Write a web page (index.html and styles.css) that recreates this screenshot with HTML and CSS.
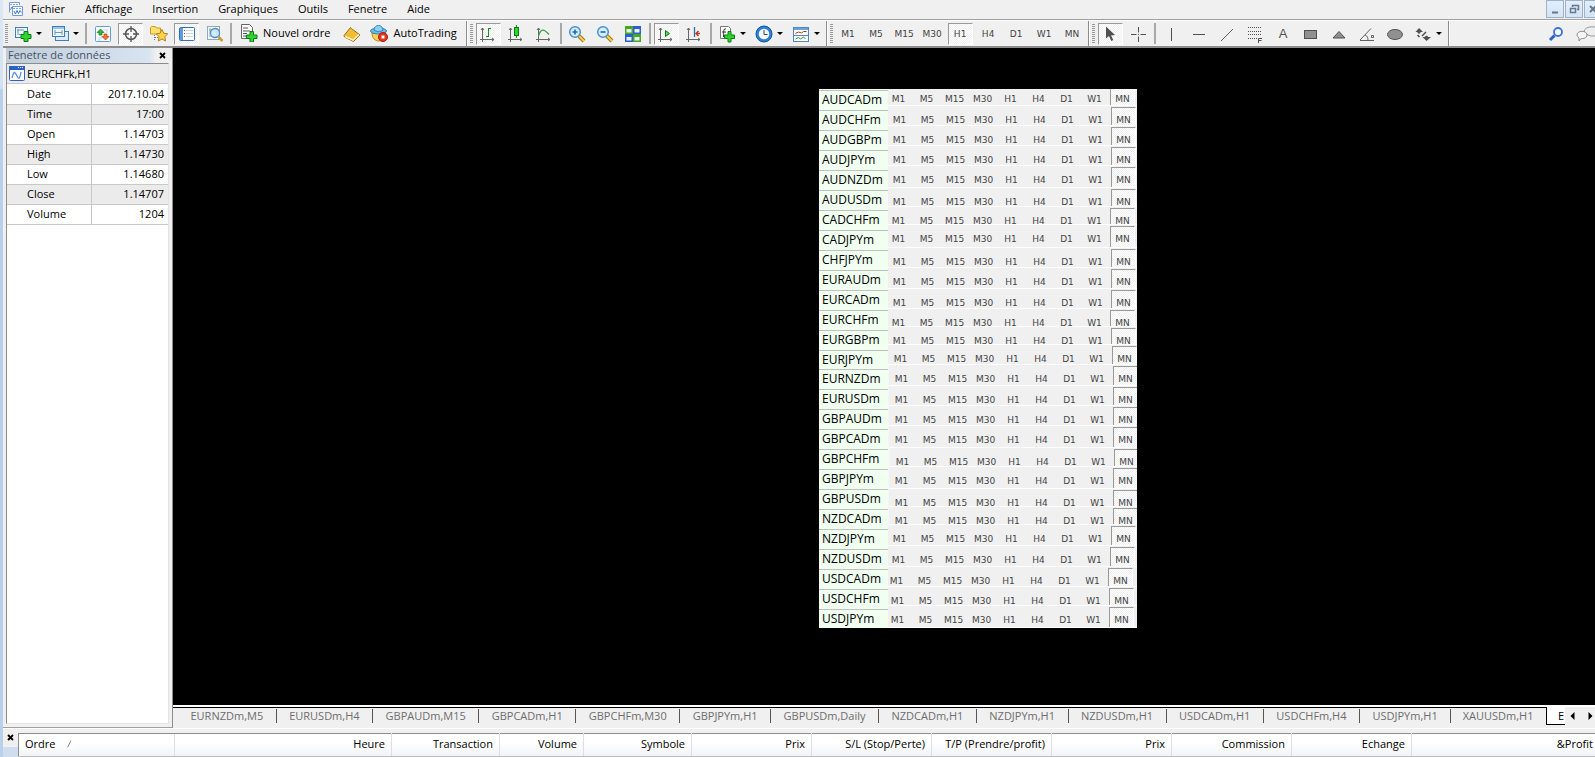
FILE: index.html
```html
<!DOCTYPE html>
<html lang="fr">
<head>
<meta charset="utf-8">
<title>Terminal</title>
<link rel="stylesheet" href="styles.css">
</head>
<body>
<div class="app">
  <header class="menubar">
    <svg class="app-icon" width="16" height="16" viewBox="0 0 16 16"><path d="M1.500 11.500V1.500h10V4M4.500 5.500h10v9h-10z" fill="#fff" stroke="#6f9be0"/><path d="M2 3.500h9M5 7.500h9" stroke="#7ba6ea" stroke-dasharray="2 1"/><path d="M2.500 9l1-3 1 2" fill="none" stroke="#5f90de"/><path d="M6 10l1.500 3L9 9.500l1.500 3 1.500-3 1.500 2" fill="none" stroke="#3d73d0"/></svg>
    <nav class="menus">
      <button>Fichier</button><button>Affichage</button><button>Insertion</button><button>Graphiques</button><button>Outils</button><button>Fenetre</button><button>Aide</button>
    </nav>
    <div class="window-buttons">
      <button aria-label="Réduire"><svg width="16" height="16" viewBox="0 0 16 16"><path d="M5 11.500h6" stroke="#66788c" stroke-width="2"/></svg></button>
      <button aria-label="Restaurer"><svg width="16" height="16" viewBox="0 0 16 16"><path d="M6.500 6V4.500h6v4H11M4.500 7.500h5v4h-5z" fill="none" stroke="#66788c" stroke-width="1.500"/></svg></button>
      <button aria-label="Fermer"><svg width="16" height="16" viewBox="0 0 16 16"><path d="M5 5l6 6M11 5l-6 6" stroke="#66788c" stroke-width="2"/></svg></button>
    </div>
  </header>

  <div class="toolbars">
    <div class="toolbar">
      <span class="grip"></span>
      <button class="tool drop" aria-label="Nouveau graphique"><svg width="18" height="18" viewBox="0 0 18 18"><rect x="1.500" y="2.500" width="12" height="10" fill="#eef6fd" stroke="#3f7fb5"/><path d="M4 4v6M3 5h7M5 9.500h4" stroke="#6b98bd" fill="none"/><path d="M10 6.500h4v3h3v4h-3v3h-4v-3H7v-4h3z" fill="#2fd52f" stroke="#0a7c12"/></svg></button>
      <button class="tool drop" aria-label="Profils"><svg width="18" height="18" viewBox="0 0 18 18"><rect x="4.500" y="6.500" width="13" height="9" fill="#dcebf7" stroke="#3f7fb5"/><rect x="1.500" y="1.500" width="12" height="10" fill="#eef6fd" stroke="#3f7fb5"/><path d="M2 3h11" stroke="#9cc3e3" stroke-width="2"/><path d="M4 5v5M11 5v5M4 7.500h7" stroke="#6b98bd"/></svg></button>
      <span class="sep"></span>
      <button class="tool" aria-label="Fenetre du marché"><svg width="18" height="18" viewBox="0 0 18 18"><rect x="1.500" y="1.500" width="15" height="15" rx="1" fill="#f7fbff" stroke="#5f9fd5"/><path d="M10 5h4M12 7h2M4 13h4M4 15h2" stroke="#b9d4ec"/><path d="M3 7.500L6.500 4 10 7.500H8v2.500H5V7.500z" fill="#35b435" stroke="#157c1b" stroke-width=".7"/><path d="M8 11.500L11.500 15 15 11.500h-2V9h-3v2.500z" fill="#f2753a" stroke="#b8400e" stroke-width=".7"/></svg></button>
      <button class="tool pressed" aria-label="Fenetre de données"><svg width="18" height="18" viewBox="0 0 18 18"><circle cx="9" cy="9" r="5.500" fill="none" stroke="#555" stroke-width="1.500"/><path d="M9 1v6M9 11v6M1 9h6M11 9h6" stroke="#555" stroke-width="1.300"/></svg></button>
      <button class="tool" aria-label="Navigateur"><svg width="18" height="18" viewBox="0 0 18 18"><path d="M.5 2.500l1-1h4l1 1.500h4v6H.5z" fill="#ffe071" stroke="#c79a2a"/><path d="M4.500 10v6M5 12.500h4" stroke="#777" stroke-dasharray="1 1"/><path d="M12 4.500l1.800 3.800 4 .5-3 2.900.8 4.300-3.600-2-3.700 2 .8-4.300-3-2.900 4-.5z" fill="#ffd34a" stroke="#b8831b"/></svg></button>
      <button class="tool pressed" aria-label="Terminal"><svg width="18" height="18" viewBox="0 0 18 18"><rect x="1.500" y="2.500" width="15" height="13" rx="1" fill="#fff" stroke="#2f6fb2"/><path d="M3.500 3v12" stroke="#5b9be0" stroke-width="3"/><path d="M6 5.500h1M6 8.500h1M6 11.500h1" stroke="#d33"/><path d="M8 5.500h7M8 8.500h7M8 11.500h7" stroke="#c6d6e6"/></svg></button>
      <button class="tool" aria-label="Testeur"><svg width="18" height="18" viewBox="0 0 18 18"><rect x="1.500" y="1.500" width="12" height="13" fill="#f4f8fc" stroke="#8fa9c0"/><path d="M4 3v9M11 3v9M3 5h8" stroke="#8aa" /><circle cx="9" cy="8" r="4.500" fill="#cfe6fa" fill-opacity=".85" stroke="#4f8fc8" stroke-width="1.300"/><path d="M12.500 12l4 4" stroke="#c9a02c" stroke-width="2.500"/></svg></button>
      <span class="sep"></span>
      <button class="tool wide"><svg width="20" height="18" viewBox="0 0 20 18"><path d="M3.500.5h8l3 3v11h-11z" fill="#fff" stroke="#666"/><path d="M5 4h5M5 7h7M5 9.500h4M5 12h3" stroke="#555"/><path d="M12 7.500h3.500V11H19v3.500h-3.500V18H12v-3.500H8.500V11H12z" fill="#2fd52f" stroke="#0a7c12"/></svg>Nouvel ordre</button>
      <button class="tool" aria-label="MetaEditor"><svg width="18" height="18" viewBox="0 0 18 18"><path d="M1 10.500L7.500 2.500c1 1.500 2 2 3 2.500L17 10l-6.500 6.500L1.500 12z" fill="#f0bd38" stroke="#9d6a12"/><path d="M2 11.500l8 3.500 6-5.500" fill="none" stroke="#fff0b0" stroke-width="1.500"/></svg></button>
      <button class="tool wide"><svg width="18" height="18" viewBox="0 0 18 18"><path d="M2 9c0 5 3 8 7 8s6-4 6-8z" fill="#ffd34a" stroke="#b8831b"/><ellipse cx="8.500" cy="7" rx="8" ry="3" fill="#6fb9e6" stroke="#3482b8"/><path d="M4 6c0-6 9-6 9 0-2 2-7 2-9 0z" fill="#8fd0f5" stroke="#3482b8"/><circle cx="13" cy="13" r="4.500" fill="#e2341d" stroke="#a81a0a"/><rect x="11.500" y="11.500" width="3" height="3" fill="#fff"/></svg>AutoTrading</button>
    </div>
    <div class="toolbar">
      <span class="grip"></span>
      <button class="tool pressed" aria-label="Barres"><svg width="18" height="18" viewBox="0 0 18 18"><path d="M3.500 3v14M1 14.500h14M2 5l1.500-2L5 5M13 13l2 1.500-2 1.500" fill="none" stroke="#666"/><path d="M9.500 3v9M7 11.500h2.500M9.500 3.500H12" stroke="#149414" fill="none"/></svg></button>
      <button class="tool" aria-label="Bougies"><svg width="18" height="18" viewBox="0 0 18 18"><path d="M3.500 3v14M1 14.500h14M2 5l1.500-2L5 5M13 13l2 1.500-2 1.500" fill="none" stroke="#666"/><path d="M9.500 0v13" stroke="#149414"/><rect x="7.500" y="2.500" width="4" height="8" fill="#2fd52f" stroke="#0a7c12"/></svg></button>
      <button class="tool" aria-label="Ligne"><svg width="18" height="18" viewBox="0 0 18 18"><path d="M3.500 3v14M1 14.500h14M2 5l1.500-2L5 5M13 13l2 1.500-2 1.500" fill="none" stroke="#666"/><path d="M3.500 11C6 3 9 4 14 9.500" fill="none" stroke="#38a048" stroke-width="1.300"/></svg></button>
      <span class="sep"></span>
      <button class="tool" aria-label="Zoom avant"><svg width="18" height="18" viewBox="0 0 18 18"><path d="M11 11l5 5" stroke="#a87c1a" stroke-width="4"/><path d="M11 11l5 5" stroke="#f5cf4a" stroke-width="2"/><circle cx="7" cy="7" r="5.300" fill="#d6ecfb" stroke="#4792cc" stroke-width="1.500"/><path d="M7 4.500v5M4.500 7h5" stroke="#1e6aa8" stroke-width="1.600"/></svg></button>
      <button class="tool" aria-label="Zoom arrière"><svg width="18" height="18" viewBox="0 0 18 18"><path d="M11 11l5 5" stroke="#a87c1a" stroke-width="4"/><path d="M11 11l5 5" stroke="#f5cf4a" stroke-width="2"/><circle cx="7" cy="7" r="5.300" fill="#d6ecfb" stroke="#4792cc" stroke-width="1.500"/><path d="M4.500 7h5" stroke="#1e6aa8" stroke-width="1.600"/></svg></button>
      <button class="tool" aria-label="Mosaïque"><svg width="18" height="18" viewBox="0 0 18 18"><path d="M1 1h8v8H1zM9 9h8v8H9z" fill="#45a81f"/><path d="M9 1h8v8H9zM1 9h8v8H1z" fill="#2a5fcf"/><path d="M2.500 4h5v3.500h-5zM10.500 4h5v3.500h-5zM2.500 12h5v3.500h-5zM10.500 12h5v3.500h-5z" fill="#e8f2ff"/></svg></button>
      <span class="sep"></span>
      <button class="tool pressed" aria-label="Défilement automatique"><svg width="18" height="18" viewBox="0 0 18 18"><path d="M3.500 3v14M1 14.500h14M2 5l1.500-2L5 5M13 13l2 1.500-2 1.500" fill="none" stroke="#666"/><path d="M8.500 5.500l4 3-4 3z" fill="#5fd55f" stroke="#0a7c12"/></svg></button>
      <button class="tool" aria-label="Décalage"><svg width="18" height="18" viewBox="0 0 18 18"><path d="M3.500 3v14M1 14.500h14M2 5l1.500-2L5 5M13 13l2 1.500-2 1.500" fill="none" stroke="#666"/><path d="M9.500 2v10" stroke="#2670b8" stroke-width="1.300"/><path d="M15 8.500h-4M13.500 6l-2.500 2.500 2.500 2.500" stroke="#c0391b" fill="none" stroke-width="1.500"/></svg></button>
      <span class="sep"></span>
      <button class="tool drop" aria-label="Indicateurs"><svg width="18" height="18" viewBox="0 0 18 18"><path d="M2.500 1.500h8l2 2v10h-10z" fill="#fff" stroke="#777"/><path d="M8 4c-3-1-2 3-2.500 8M4 7h4" fill="none" stroke="#333"/><path d="M10 6.500h3v3.500h3.500v3.500H13V17h-3v-3.500H6.500V10H10z" fill="#2fd52f" stroke="#0a7c12"/></svg></button>
      <button class="tool drop" aria-label="Périodes"><svg width="18" height="18" viewBox="0 0 18 18"><circle cx="9" cy="9" r="8" fill="#2a7fd4" stroke="#15549a"/><circle cx="9" cy="9" r="5.300" fill="#f2f8fe"/><path d="M9 5v4.500h3.500" fill="none" stroke="#444"/></svg></button>
      <button class="tool drop" aria-label="Modèles"><svg width="18" height="18" viewBox="0 0 18 18"><rect x="1.500" y="2.500" width="15" height="14" fill="#fff" stroke="#4f87bd"/><path d="M2 4h14" stroke="#6ba4dc" stroke-width="2"/><path d="M2 10.500h14" stroke="#4f87bd"/><path d="M3.500 8.500l3-1.500 3 1 2-1.500h3" fill="none" stroke="#a33a1e"/><path d="M3.500 14l3-1.500 2 1.500 3-2 2 2" fill="none" stroke="#2b9a3a"/></svg></button>
    </div>
    <div class="toolbar">
      <span class="grip"></span>
      <button class="tool tf">M1</button><button class="tool tf">M5</button><button class="tool tf">M15</button><button class="tool tf">M30</button><button class="tool tf pressed">H1</button><button class="tool tf">H4</button><button class="tool tf">D1</button><button class="tool tf">W1</button><button class="tool tf">MN</button>
    </div>
    <div class="toolbar">
      <span class="grip"></span>
      <button class="tool pressed" aria-label="Curseur"><svg width="18" height="18" viewBox="0 0 18 18"><path d="M5 1.500v12l3-2.500 2.300 5 2-1L10 10.500l4-.5z" fill="#505050"/></svg></button>
      <button class="tool" aria-label="Réticule"><svg width="18" height="18" viewBox="0 0 18 18"><path d="M9.500 2v5.500M9.500 11.500V17M2 9.500h5.500M11.500 9.500H17M9 9.500h1" stroke="#505050"/></svg></button>
      <span class="sep"></span>
      <button class="tool" aria-label="Ligne verticale"><svg width="18" height="18" viewBox="0 0 18 18"><path d="M9.500 3v13" stroke="#505050"/></svg></button>
      <button class="tool" aria-label="Ligne horizontale"><svg width="18" height="18" viewBox="0 0 18 18"><path d="M3 9.500h12" stroke="#505050"/></svg></button>
      <button class="tool" aria-label="Ligne de tendance"><svg width="18" height="18" viewBox="0 0 18 18"><path d="M3 16L15 4" stroke="#606060"/></svg></button>
      <button class="tool" aria-label="Fibonacci"><svg width="18" height="18" viewBox="0 0 18 18"><path d="M2 2.500h14M2 6.500h14M2 9.500h14M2 13.500h9" stroke="#505050" stroke-dasharray="1 1"/><path d="M12.500 18v-4.500H16M12.500 15.500h3" fill="none" stroke="#505050"/></svg></button>
      <button class="tool letter" aria-label="Texte">A</button>
      <button class="tool" aria-label="Rectangle"><svg width="18" height="18" viewBox="0 0 18 18"><rect x="2.500" y="5.500" width="12" height="8" fill="#909090" stroke="#505050"/></svg></button>
      <button class="tool" aria-label="Triangle"><svg width="18" height="18" viewBox="0 0 18 18"><path d="M3 13L9 6.500l6 6.500z" fill="#909090" stroke="#505050"/></svg></button>
      <button class="tool" aria-label="Angle"><svg width="18" height="18" viewBox="0 0 18 18"><path d="M2 15.500h14M2 15L13 3.500M7 10c2.500 1 3 3 3 5.500M13.500 10.500h2v2h-2z" fill="none" stroke="#606060"/></svg></button>
      <button class="tool" aria-label="Ellipse"><svg width="18" height="18" viewBox="0 0 18 18"><ellipse cx="9" cy="9.500" rx="7.500" ry="5" fill="#909090" stroke="#505050"/></svg></button>
      <button class="tool drop" aria-label="Flèches"><svg width="18" height="18" viewBox="0 0 18 18"><path d="M5 3l4 4H7L5 9 3 7H1.500zM12.500 16l-4-4h2l2-1.500 2 1.500H17z" fill="#505050"/><path d="M3.500 10l2 2M8 11l4-4" stroke="#505050" stroke-width="1.500"/></svg></button>
    </div>
    <div class="toolbar-end">
      <button class="tool" aria-label="Rechercher"><svg width="18" height="18" viewBox="0 0 18 18"><path d="M3 15l4.500-4.500" stroke="#2a62c8" stroke-width="3"/><circle cx="11" cy="7" r="4" fill="#f6faff" stroke="#3b74d8" stroke-width="1.800"/></svg></button>
      <button class="tool" aria-label="Messages"><svg width="22" height="18" viewBox="0 0 22 18"><path d="M8 7c0-7 16-7 16 0 0 3-3 4-6 4l-3 0-3-1z" fill="#eee" stroke="#999"/><path d="M1 10c0-5 10-5 10 0 0 3-4 4-6 3.500L3 16v-3c-1-1-2-2-2-3z" fill="#f5f5f5" stroke="#8a8a8a"/></svg></button>
    </div>
  </div>

  <div class="workspace">
    <aside class="data-window">
      <div class="panel-title"><span>Fenetre de données</span><button class="close" aria-label="Fermer la fenetre"><svg width="7" height="7" viewBox="0 0 7 7"><path d="M1 1l5 5M6 1L1 6" stroke="#000" stroke-width="1.800"/></svg></button></div>
      <div class="data-box">
        <div class="data-symbol"><svg width="16" height="15" viewBox="0 0 16 15"><rect x=".5" y=".5" width="15" height="14" rx="1" fill="#fff" stroke="#2a62c8"/><path d="M0 2h16" stroke="#2a62c8" stroke-width="4"/><path d="M9 1.500h1M11 1.500h1M13 1.500h1" stroke="#fff"/><path d="M3 12c2-8 3-6 5-2s3 2 4-4" fill="none" stroke="#5b8fe0" stroke-width="1.300"/></svg>EURCHFk,H1</div>
        <table class="data-table">
          <tr><th scope="row">Date</th><td>2017.10.04</td></tr>
          <tr><th scope="row">Time</th><td>17:00</td></tr>
          <tr><th scope="row">Open</th><td>1.14703</td></tr>
          <tr><th scope="row">High</th><td>1.14730</td></tr>
          <tr><th scope="row">Low</th><td>1.14680</td></tr>
          <tr><th scope="row">Close</th><td>1.14707</td></tr>
          <tr><th scope="row">Volume</th><td>1204</td></tr>
        </table>
      </div>
    </aside>
    <main class="chart-side">
      <div class="chart">
        <div class="matrix">
          <ul class="symbols" id="symbols"></ul>
          <div class="strips" id="strips"></div>
        </div>
      </div>
      <div class="chart-tabs">
        <nav class="tab-list">
          <button>EURNZDm,M5</button><button>EURUSDm,H4</button><button>GBPAUDm,M15</button><button>GBPCADm,H1</button><button>GBPCHFm,M30</button><button>GBPJPYm,H1</button><button>GBPUSDm,Daily</button><button>NZDCADm,H1</button><button>NZDJPYm,H1</button><button>NZDUSDm,H1</button><button>USDCADm,H1</button><button>USDCHFm,H4</button><button>USDJPYm,H1</button><button>XAUUSDm,H1</button>
        </nav>
        <button class="active-tab">E</button>
        <div class="tab-arrows">
          <button aria-label="Précédent"><svg width="5" height="8" viewBox="0 0 5 8"><path d="M4.500 0v8L.5 4z"/></svg></button>
          <button aria-label="Suivant"><svg width="5" height="8" viewBox="0 0 5 8"><path d="M.5 0v8l4-4z"/></svg></button>
        </div>
      </div>
    </main>
  </div>

  <footer class="terminal">
    <div class="terminal-side"><button class="close" aria-label="Fermer le terminal"><svg width="7" height="7" viewBox="0 0 7 7"><path d="M1 1l5 5M6 1L1 6" stroke="#000" stroke-width="1.800"/></svg></button></div>
    <table class="orders">
      <colgroup><col class="c-order"><col class="c-time"><col class="c-mid"><col class="c-small"><col class="c-mid"><col class="c-std"><col class="c-std"><col class="c-std"><col class="c-std"><col class="c-std"><col class="c-std"><col></colgroup>
      <tr><th class="first">Ordre<svg width="8" height="8" viewBox="0 0 8 8"><path d="M.5 7.500L4 .5" stroke="#888"/><path d="M4 .5l3.500 7h-7" fill="none" stroke="#fff"/></svg></th><th>Heure</th><th>Transaction</th><th>Volume</th><th>Symbole</th><th>Prix</th><th>S/L (Stop/Perte)</th><th>T/P (Prendre/profit)</th><th>Prix</th><th>Commission</th><th>Echange</th><th class="last">&amp;Profit</th></tr>
    </table>
  </footer>
</div>
<script src="script.js"></script>
</body>
</html>
```
FILE: styles.css
```css
* { box-sizing: border-box; }
body {
  margin: 0;
  font: 11px/16px "Open Sans", "Noto Sans", sans-serif;
  color: #000;
  background: linear-gradient(#dce8f5, #d3e2f3 88px, #b9d1ea 90px);
}
button {
  margin: 0;
  padding: 0;
  border: 0;
  background: none;
  font: inherit;
  color: inherit;
}
svg { flex: none; display: block; }

.app {
  display: flex;
  flex-direction: column;
  height: 100vh;
  margin-left: 3px;
  background: #f0f0f0;
  overflow: hidden;
}

/* Menu bar */
.menubar {
  display: flex;
  align-items: center;
  height: 20px;
  flex: none;
  padding-bottom: 2px;
  border-bottom: 1px solid #a0a0a0;
}
.app-icon { margin: 0 7px 0 5px; }
.menus { display: flex; gap: 20px; flex: 1; }
.window-buttons { display: flex; gap: 1px; height: 18px; margin-right: -7px; }
.window-buttons button {
  width: 18px;
  border: 1px solid #9fb2c8;
  background: linear-gradient(#e2eefb, #d3e4f6);
  overflow: hidden;
}

/* Toolbars */
.toolbars {
  display: flex;
  height: 28px;
  flex: none;
  border-top: 1px solid #fff;
  border-bottom: 2px solid #8c8c8c;
  overflow: hidden;
}
.toolbar {
  display: flex;
  align-items: center;
  gap: 3px;
  flex: none;
  padding: 0 3px 0 2px;
  border-right: 1px solid #8c8c8c;
  box-shadow: 1px 0 #fff;
}
.toolbar + .toolbar { padding-left: 3px; }
.grip {
  width: 3px;
  height: 19px;
  background: repeating-linear-gradient(#999 0 1px, #f0f0f0 1px 2px);
}
.sep { width: 2px; height: 21px; background: #a8a8a8; }
.tool {
  display: flex;
  align-items: center;
  justify-content: center;
  flex: none;
  width: 25px;
  height: 22px;
}
.tool.wide { width: auto; padding: 0 6px 2px 3px; gap: 5px; }
.tool.drop { width: 34px; gap: 4px; }
.tool.drop::after {
  content: "";
  border: 3px solid transparent;
  border-top-color: #000;
  border-bottom: 0;
}
.pressed {
  border: 1px solid #fff;
  border-top-color: #999;
  border-left-color: #999;
  background: repeating-conic-gradient(#fff 0 25%, #f0f0f0 0 50%) 0 0 / 2px 2px;
}
.tf { font: 9px/12px "DejaVu Sans", sans-serif; color: #444; }
.letter { font: 13px/16px "Liberation Sans", sans-serif; color: #505050; }
.toolbar-end { display: flex; align-items: center; gap: 6px; margin: 0 -4px 0 auto; }

/* Work area */
.workspace { display: flex; flex: 1; min-height: 0; }
.data-window {
  display: flex;
  flex-direction: column;
  width: 170px;
  flex: none;
  padding: 0 3px 3px;
  border-right: 1px solid #8c8c8c;
  border-bottom: 1px solid #a0a0a0;
}
.panel-title {
  display: flex;
  align-items: center;
  justify-content: space-between;
  height: 15px;
  flex: none;
  padding: 0 3px 1px 2px;
  color: #4a5360;
  background: linear-gradient(90deg, #bfcddb, #d9e4f1 88%, #f0f0f0 92%);
}
.data-box {
  flex: 1;
  background: #fff;
  border: 1px solid #8c8c8c;
  border-right-color: #e3e3e3;
  border-bottom-color: #e3e3e3;
}
.data-symbol {
  display: flex;
  align-items: center;
  gap: 2px;
  height: 20px;
  padding-left: 2px;
  font-size: 11px;
  background: #ebebeb;
  border-bottom: 1px solid #c8c8c8;
}
.data-table { width: 100%; border-collapse: collapse; }
.data-table tr { height: 20px; border-bottom: 1px solid #c8c8c8; }
.data-table tr:nth-child(even) { background: #ebebeb; }
.data-table th { width: 84px; padding: 0 0 0 20px; font-weight: 400; text-align: left; border-right: 1px solid #c8c8c8; }
.data-table td { padding: 0 4px 0 0; text-align: right; }

.chart-side { display: flex; flex-direction: column; flex: 1; min-width: 0; }
.chart {
  flex: 1;
  display: flex;
  justify-content: center;
  align-items: flex-start;
  padding: 41px 0 0 188px;
  background: #000;
}

/* Symbol / timeframe matrix */
.matrix { display: flex; width: 318px; background: #f6f6f6; overflow: hidden; }
.symbols { width: 69px; flex: none; margin: 0; padding: 1px 0 0; list-style: none; background: #f0fff0; font-size: 12px; line-height: 17px; }
.symbols li { height: 20px; padding-left: 3px; border-top: 1px solid #c0c0c0; overflow: hidden; }
.symbols li.short, .symbols li:last-child { height: 19px; }
.strips { flex: 1; min-width: 0; overflow: hidden; }
.strip {
  display: flex;
  gap: 3px;
  padding-top: 1px;
  background: #f0f0f0;
  border-bottom: 1px solid #fff;
  overflow: hidden;
}
.strip:first-child { align-items: center; padding-top: 4px; }
.strip .tf { height: 26px; }

/* Chart tabs */
.chart-tabs { display: flex; height: 23px; flex: none; border-top: 2px solid #fff; }
.tab-list { display: flex; flex: 1; padding-left: 4px; border-top: 1px solid #000; }
.tab-list button { flex: 1 1 auto; height: 16px; color: #6d6d6d; display: flex; align-items: center; justify-content: center; }
.tab-list button:not(:last-child)::after { content: ""; width: 1px; height: 14px; margin: 0 -1px 0 auto; background: #555; }
.tab-list button:not(:last-child)::before { content: ""; width: 1px; margin-right: auto; }
.active-tab { width: 19px; height: 18px; padding-left: 11px; text-align: left; background: #fff; border: solid #000; border-width: 0 0 1px 1px; }
.tab-arrows { display: flex; align-items: center; justify-content: space-between; width: 30px; padding: 0 2px 4px 5px; }

/* Terminal */
.terminal { display: flex; height: 29px; flex: none; padding-top: 4px; border-top: 1px solid #fff; }
.terminal-side { display: flex; align-items: flex-start; width: 15px; flex: none; padding: 1px 0 0 4px; background: linear-gradient(#f0f0f0 14px, #cfdeee 14px); }
.orders { flex: 1; width: 0; table-layout: fixed; border-collapse: collapse; border-top: 1px solid #8c8c8c; border-left: 1px solid #8c8c8c; border-bottom: 2px solid #c0c0c0; background: linear-gradient(#fff 40%, #f0f2f4); }
.orders th { padding: 0 6px 3px 0; font-weight: 400; text-align: right; white-space: nowrap; border-right: 1px solid #dedfe1; }
.orders .first { display: flex; align-items: center; gap: 12px; height: 22px; padding-left: 6px; }
.orders .last { padding-right: 2px; border-right: 0; }
.c-order { width: 156px; }
.c-time { width: 217px; }
.c-mid { width: 108px; }
.c-small { width: 84px; }
.c-std { width: 120px; }
```
FILE: script.js
```js
// [symbol, strip height, strip inset]
const rows = [
  ["AUDCADm", 17, -2], ["AUDCHFm", 20, -1], ["AUDGBPm", 20, -1], ["AUDJPYm", 20, -1],
  ["AUDNZDm", 22, -1], ["AUDUSDm", 19, -1], ["CADCHFm", 18, -2], ["CADJPYm", 23, -2],
  ["CHFJPYm", 20, -1], ["EURAUDm", 21, -1], ["EURCADm", 20, -1], ["EURCHFm", 18, -2],
  ["EURGBPm", 18, -1], ["EURJPYm", 20, 0], ["EURNZDm", 21, 1], ["EURUSDm", 20, 1],
  ["GBPAUDm", 20, 1], ["GBPCADm", 22, 1], ["GBPCHFm", 19, 2], ["GBPJPYm", 22, 1],
  ["GBPUSDm", 18, 1], ["NZDCADm", 18, 1], ["NZDJPYm", 21, -1], ["NZDUSDm", 21, -2],
  ["USDCADm", 20, -4], ["USDCHFm", 19, -3], ["USDJPYm", 22, -3]
];
const frames = ["M1", "M5", "M15", "M30", "H1", "H4", "D1", "W1", "MN"];
const symbols = document.getElementById("symbols");
const strips = document.getElementById("strips");

for (const [name, height, inset] of rows) {
  const item = document.createElement("li");
  item.textContent = name;
  if (name === "EURJPYm") item.className = "short";
  symbols.append(item);

  const strip = document.createElement("div");
  strip.className = "strip";
  strip.style.height = height + "px";
  strip.style.marginLeft = inset + "px";
  for (const frame of frames) {
    const button = document.createElement("button");
    button.className = frame === "MN" ? "tool tf pressed" : "tool tf";
    button.textContent = frame;
    button.setAttribute("aria-label", name + " " + frame);
    strip.append(button);
  }
  strips.append(strip);
}
```
